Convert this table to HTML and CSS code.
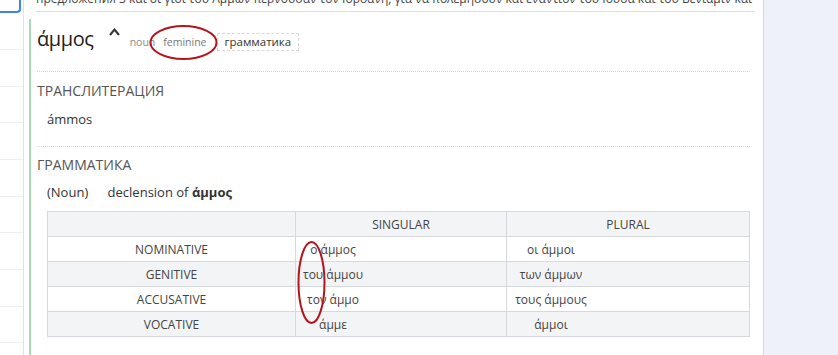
FILE: index.html
```html
<!DOCTYPE html>
<html lang="ru">
<head>
  <meta charset="UTF-8" />
  <meta name="viewport" content="width=device-width, initial-scale=1.0" />
  <title>άμμος</title>
  <link rel="stylesheet" href="styles.css">
</head>
<body>
  <div class="page">
    <nav class="sidebar">
      <div class="search-box"></div>
      <ul class="word-list">
        <li></li><li></li><li></li><li></li><li></li><li></li><li></li><li></li><li></li>
      </ul>
    </nav>

    <main class="content">
      <div class="example">
        <p>предложения 3 και οι γιοί του Αμμών περνούσαν τον Ιορδάνη, για να πολεμήσουν και εναντίον του Ιούδα και του Βενιαμίν και του</p>
      </div>

      <article class="entry">
        <header class="entry-head">
          <h1 class="lemma">άμμος</h1>
          <button type="button" class="collapse" aria-label="Свернуть">
            <svg width="11" height="8" viewBox="0 0 11 8"><polyline points="1,7 5.5,1.5 10,7" fill="none" stroke="#333" stroke-width="2"/></svg>
          </button>
          <span class="pos">noun</span>
          <span class="gender">feminine</span>
          <span class="tag">грамматика</span>
        </header>

        <section class="block">
          <h2>Транслитерация</h2>
          <p class="translit">ámmos</p>
        </section>

        <section class="block last">
          <h2>Грамматика</h2>
          <p class="decl"><span class="pos-label">(Noun)</span> declension of <b>άμμος</b></p>
          <table class="inflection">
            <colgroup>
              <col class="c-case"><col class="c-sg"><col class="c-pl">
            </colgroup>
            <thead>
              <tr><th></th><th>Singular</th><th>Plural</th></tr>
            </thead>
            <tbody>
              <tr><td class="case">Nominative</td><td class="sg"><span>ο άμμος</span></td><td class="pl"><span>οι άμμοι</span></td></tr>
              <tr><td class="case">Genitive</td><td class="sg"><span>του άμμου</span></td><td class="pl"><span>των άμμων</span></td></tr>
              <tr><td class="case">Accusative</td><td class="sg"><span>τον άμμο</span></td><td class="pl"><span>τους άμμους</span></td></tr>
              <tr><td class="case">Vocative</td><td class="sg"><span>άμμε</span></td><td class="pl"><span>άμμοι</span></td></tr>
            </tbody>
          </table>
        </section>
      </article>
    </main>

    <aside class="panel"></aside>
  </div>

  <!-- pen marks drawn over the entry -->
  <svg class="marks" width="838" height="355" viewBox="0 0 838 355">
    <ellipse cx="183.5" cy="42.5" rx="33" ry="16.5" />
    <ellipse cx="311.5" cy="282.5" rx="13" ry="40.5" />
  </svg>
</body>
</html>
```

FILE: styles.css
```css
html, body {
  margin: 0;
  height: 100%;
}
body {
  font-family: "Open Sans", "Noto Sans", "DejaVu Sans", sans-serif;
  color: #333;
  background: #fff;
  position: relative;
  overflow: hidden;
}
.page {
  display: flex;
  height: 100vh;
}

/* left word list */
.sidebar {
  width: 23px;
  flex-shrink: 0;
  border-right: 1px solid #dce2ea;
}
.search-box {
  width: 19px;
  height: 11px;
  border: solid #3f84e5;
  border-width: 0 2px 2px 0;
  border-bottom-right-radius: 4px;
}
.word-list {
  list-style: none;
  margin: 0;
  padding: 0;
}
.word-list li {
  height: 35.67px;
  border-bottom: 1px solid #eceff3;
}
.word-list li:first-child {
  height: 36px;
}

/* main column */
.content {
  flex: 1;
  min-width: 0;
  display: flex;
  flex-direction: column;
  padding-right: 8px;
}
.example {
  margin-left: 12px;
  height: 12px;
  border-bottom: 1px solid #dedede;
  overflow: hidden;
}
.example p {
  margin: -9px 0 0;
  font-size: 12px;
  line-height: 16px;
  color: #444;
  white-space: nowrap;
  overflow: hidden;
}
.entry {
  flex: 1;
  margin: 7px 5px 0;
  padding-left: 6px;
  border-left: 2px solid #a8dcb8;
}
.entry-head {
  display: flex;
  align-items: baseline;
  padding: 6px 0 18px;
  border-bottom: 1px dotted #d4d4d4;
}
.lemma {
  margin: 0;
  font-size: 20px;
  font-weight: 500;
  letter-spacing: -0.4px;
  line-height: 28px;
  color: #1e1e1e;
}
.collapse {
  align-self: flex-start;
  margin: 3px 0 0 15px;
  padding: 0;
  border: 0;
  background: none;
  width: 11px;
  height: 8px;
  line-height: 0;
  cursor: pointer;
}
.pos {
  margin-left: 10px;
  font-size: 10.5px;
  color: #8a8a8a;
}
.gender {
  margin-left: 8px;
  font-size: 10.5px;
  color: #777;
}
.tag {
  margin-left: 10px;
  padding: 0 7px;
  border: 1px dashed #d9d9d9;
  font-size: 11.5px;
  line-height: 16px;
  color: #333;
}

.block {
  padding: 9px 0 18px;
  border-bottom: 1px dotted #d8d8d8;
}
.block.last {
  padding-top: 8px;
  border-bottom: 0;
}
.block h2 {
  margin: 0;
  font-size: 14px;
  font-weight: normal;
  line-height: 20px;
  color: #555;
  text-transform: uppercase;
}
.translit {
  margin: 9px 0 0 10px;
  font-size: 13px;
  line-height: 18px;
}
.decl {
  margin: 8px 0 0 10px;
  font-size: 13px;
  line-height: 18px;
}
.pos-label {
  margin-right: 16px;
}

/* declension table */
.inflection {
  margin: 10px 0 0 10px;
  width: 703px;
  border-collapse: collapse;
  table-layout: fixed;
  font-size: 12px;
  color: #444;
}
.c-case { width: 248px; }
.c-sg { width: 211px; }
.c-pl { width: 243px; }
.inflection th,
.inflection td {
  height: 24px;
  padding: 0;
  border: 1px solid #d5d9de;
  text-align: center;
  font-weight: normal;
}
.inflection th {
  background: #f2f4f6;
  text-transform: uppercase;
}
.inflection tbody tr:nth-child(even) {
  background: #f3f4f6;
}
.inflection .case {
  text-transform: uppercase;
}
.inflection .sg,
.inflection .pl {
  text-align: left;
}
.inflection .sg span,
.inflection .pl span {
  display: inline-block;
  text-align: center;
}
.inflection .sg span { width: 74px; }
.inflection .pl span { width: 88px; }

/* right panel */
.panel {
  width: 74px;
  flex-shrink: 0;
  border-left: 1px solid #d3d9e1;
  background: #eef2f8;
}

.marks {
  position: absolute;
  top: 0;
  left: 0;
  pointer-events: none;
}
.marks ellipse {
  fill: none;
  stroke: #b3151d;
  stroke-width: 2;
}
```
